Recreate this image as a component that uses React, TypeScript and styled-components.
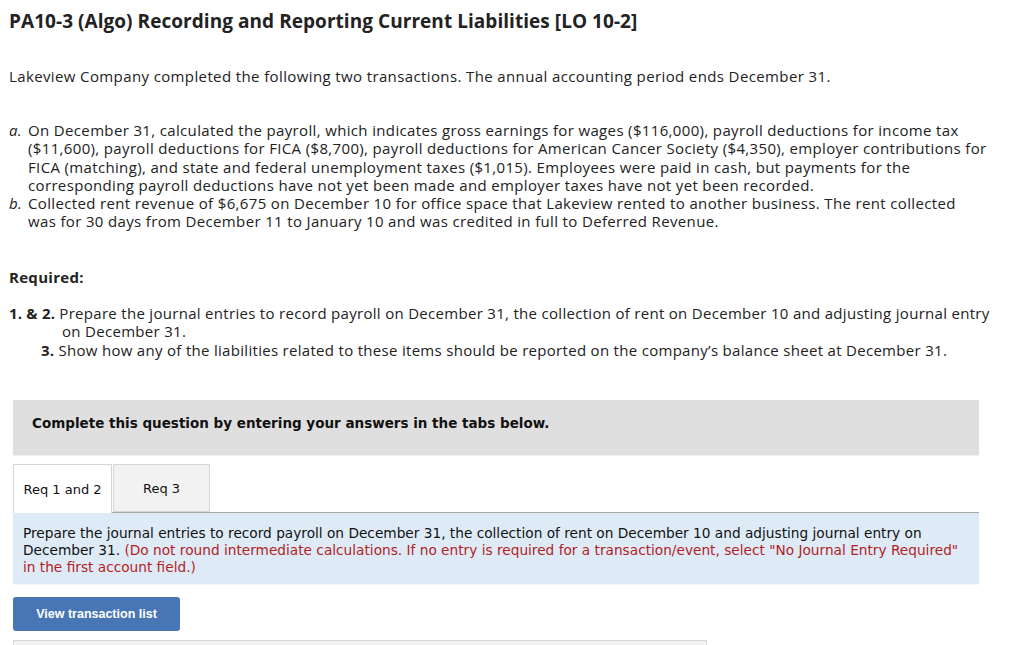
import React from "react";
import styled, { createGlobalStyle } from "styled-components";

const Global = createGlobalStyle`
  html, body { margin: 0; padding: 0; background: #fff; }
  body { font-family: "Open Sans", "Liberation Sans", sans-serif; color: #222; }
`;

const Page = styled.div`
  width: 1024px;
  height: 645px;
  overflow: hidden;
  box-sizing: border-box;
  padding: 9px 0 0 9px;
`;

const Title = styled.h1`
  margin: 0;
  font-family: "Open Sans", "Liberation Sans", sans-serif;
  font-size: 19px;
  letter-spacing: 0.05px;
  font-weight: 700;
  line-height: 24px;
  color: #222;
  white-space: nowrap;
`;

const Para = styled.p`
  margin: 34px 0 0;
  font-size: 15px;
  letter-spacing: 0.38px;
  line-height: 18px;
  white-space: nowrap;
`;

const List = styled.ul`
  list-style: none;
  margin: 36px 0 0;
  padding: 0;
  font-size: 15px;
  letter-spacing: 0.35px;
  line-height: 18.3px;
  white-space: nowrap;
`;

const Item = styled.li`
  display: grid;
  grid-template-columns: 19px 1fr;
`;

const Marker = styled.span`
  font-style: italic;
`;

const Required = styled.div`
  margin-top: 37px;
  font-size: 15px;
  letter-spacing: 0.3px;
  font-weight: 700;
  line-height: 18px;
`;

const ReqList = styled.div`
  margin-top: 18px;
  display: flex;
  flex-direction: column;
  font-size: 15px;
  letter-spacing: 0.3px;
  line-height: 18.5px;
  white-space: nowrap;
`;

const ReqRow = styled.div<{ $lead: number }>`
  padding-left: 53px;
  text-indent: ${(p) => -p.$lead}px;
`;

const ReqNum = styled.span`
  font-weight: 700;
  letter-spacing: 0.2px;
`;

const Work = styled.div`
  margin: 41px 0 0 4px;
  width: 966px;
  font-family: "DejaVu Sans", Verdana, sans-serif;
  font-size: 13px;
  color: #111;
`;

const Banner = styled.div`
  box-sizing: border-box;
  background: #dfdfdf;
  height: 56px;
  padding: 15px 0 0 19px;
  line-height: 16px;
  font-weight: 700;
  font-size: 13.5px;
  border-bottom: 1px solid #f0f0f0;
`;

const Tabs = styled.div`
  margin-top: 8px;
  display: flex;
  align-items: flex-end;
  border-bottom: 1px solid #a8a8a8;
  height: 48px;
`;

const Tab = styled.div<{ $active?: boolean }>`
  box-sizing: border-box;
  height: ${(p) => (p.$active ? 49 : 48)}px;
  margin-bottom: ${(p) => (p.$active ? -1 : 0)}px;
  width: ${(p) => (p.$active ? 99 : 97)}px;
  margin-right: 1px;
  border: 1px solid #d6d6d6;
  border-bottom: ${(p) => (p.$active ? "none" : "1px solid #d6d6d6")};
  background: ${(p) => (p.$active ? "#fff" : "#f2f2f2")};
  display: flex;
  align-items: center;
  justify-content: center;
  font-size: 13px;
`;

const Instructions = styled.div`
  background: #deebf7;
  padding: 12px 10px 8px 10px;
  font-size: 13.7px;
  line-height: 17px;
  white-space: nowrap;
  border-bottom: 1px solid #f4f6f8;
`;

const Note = styled.span`
  color: #b22222;
`;

const Button = styled.button`
  margin-top: 12px;
  width: 167px;
  height: 34px;
  border: none;
  border-radius: 3px;
  background: #4876b5;
  color: #fff;
  font-family: "Liberation Sans", Arial, sans-serif;
  font-weight: 700;
  font-size: 12.5px;
  cursor: pointer;
`;

const Panel = styled.div`
  margin-top: 9px;
  width: 692px;
  height: 40px;
  border: 1px solid #d8d8d8;
  background: #f2f2f2;
`;

export default function App() {
  return (
    <>
      <Global />
      <Page>
        <Title>PA10-3 (Algo) Recording and Reporting Current Liabilities [LO 10-2]</Title>
        <Para>
          Lakeview Company completed the following two transactions. The annual accounting period ends December 31.
        </Para>
        <List>
          <Item>
            <Marker>a.</Marker>
            <span>
              On December 31, calculated the payroll, which indicates gross earnings for wages ($116,000), payroll
              deductions for income tax
              <br />
              ($11,600), payroll deductions for FICA ($8,700), payroll deductions for American Cancer Society
              ($4,350), employer contributions for
              <br />
              FICA (matching), and state and federal unemployment taxes ($1,015). Employees were paid in cash, but
              payments for the
              <br />
              corresponding payroll deductions have not yet been made and employer taxes have not yet been recorded.
            </span>
          </Item>
          <Item>
            <Marker>b.</Marker>
            <span>
              Collected rent revenue of $6,675 on December 10 for office space that Lakeview rented to another
              business. The rent collected
              <br />
              was for 30 days from December 11 to January 10 and was credited in full to Deferred Revenue.
            </span>
          </Item>
        </List>
        <Required>Required:</Required>
        <ReqList>
          <ReqRow $lead={53}>
            <ReqNum>1. &amp; 2.</ReqNum> Prepare the journal entries to record payroll on December 31, the
            collection of rent on December 10 and adjusting journal entry
            <br />
            on December 31.
          </ReqRow>
          <ReqRow $lead={21}>
            <ReqNum>3.</ReqNum> Show how any of the liabilities related to these items should be reported on the
            company’s balance sheet at December 31.
          </ReqRow>
        </ReqList>
        <Work>
          <Banner>Complete this question by entering your answers in the tabs below.</Banner>
          <Tabs>
            <Tab $active>Req 1 and 2</Tab>
            <Tab>Req 3</Tab>
          </Tabs>
          <Instructions>
            Prepare the journal entries to record payroll on December 31, the collection of rent on December 10 and
            adjusting journal entry on
            <br />
            December 31.{" "}
            <Note>
              (Do not round intermediate calculations. If no entry is required for a transaction/event, select "No
              Journal Entry Required"
              <br />
              in the first account field.)
            </Note>
          </Instructions>
          <Button>View transaction list</Button>
          <Panel />
        </Work>
      </Page>
    </>
  );
}
